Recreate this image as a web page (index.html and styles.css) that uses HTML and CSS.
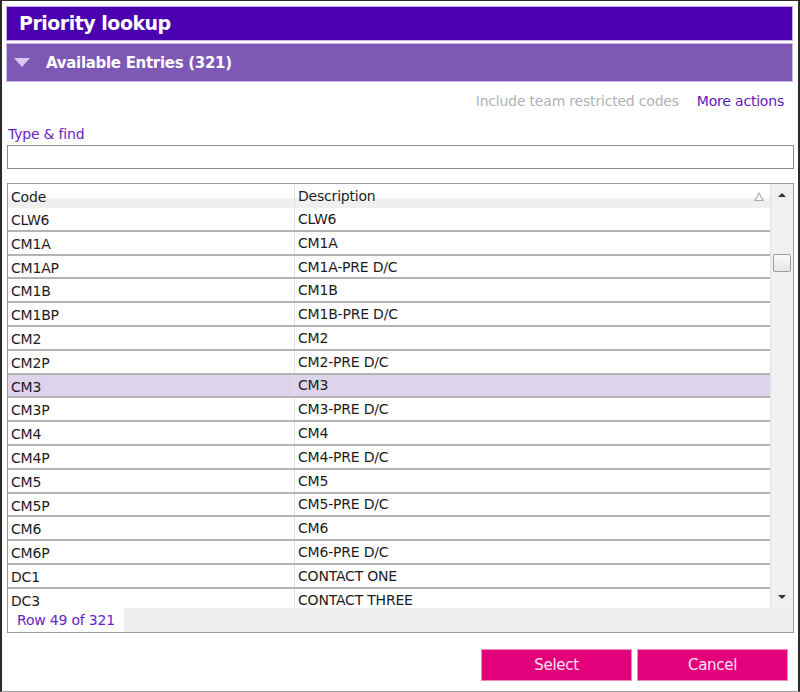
FILE: index.html
```html
<!DOCTYPE html>
<html lang="en">
<head>
  <meta charset="UTF-8" />
  <title>Priority lookup</title>
  <link rel="stylesheet" href="styles.css">
</head>
<body>
  <div class="window">
    <div class="title-bar">Priority lookup</div>
    <div class="section-bar">
      <span class="caret"></span>
      <span>Available Entries (321)</span>
    </div>

    <div class="actions">
      <span class="muted">Include team restricted codes</span>
      <a class="link">More actions</a>
    </div>

    <label class="find-label" for="find">Type &amp; find</label>
    <input id="find" class="find" type="text" />

    <div class="grid">
      <div class="grid-main">
        <div class="rows">
          <div class="row head">
            <div class="cell code">Code</div>
            <div class="cell desc">Description <span class="sort"></span></div>
          </div>
          <div class="row"><div class="cell code">CLW6</div><div class="cell desc">CLW6</div></div>
          <div class="row"><div class="cell code">CM1A</div><div class="cell desc">CM1A</div></div>
          <div class="row"><div class="cell code">CM1AP</div><div class="cell desc">CM1A-PRE D/C</div></div>
          <div class="row"><div class="cell code">CM1B</div><div class="cell desc">CM1B</div></div>
          <div class="row"><div class="cell code">CM1BP</div><div class="cell desc">CM1B-PRE D/C</div></div>
          <div class="row"><div class="cell code">CM2</div><div class="cell desc">CM2</div></div>
          <div class="row"><div class="cell code">CM2P</div><div class="cell desc">CM2-PRE D/C</div></div>
          <div class="row selected"><div class="cell code">CM3</div><div class="cell desc">CM3</div></div>
          <div class="row"><div class="cell code">CM3P</div><div class="cell desc">CM3-PRE D/C</div></div>
          <div class="row"><div class="cell code">CM4</div><div class="cell desc">CM4</div></div>
          <div class="row"><div class="cell code">CM4P</div><div class="cell desc">CM4-PRE D/C</div></div>
          <div class="row"><div class="cell code">CM5</div><div class="cell desc">CM5</div></div>
          <div class="row"><div class="cell code">CM5P</div><div class="cell desc">CM5-PRE D/C</div></div>
          <div class="row"><div class="cell code">CM6</div><div class="cell desc">CM6</div></div>
          <div class="row"><div class="cell code">CM6P</div><div class="cell desc">CM6-PRE D/C</div></div>
          <div class="row"><div class="cell code">DC1</div><div class="cell desc">CONTACT ONE</div></div>
          <div class="row"><div class="cell code">DC3</div><div class="cell desc">CONTACT THREE</div></div>
        </div>
        <div class="scrollbar">
          <span class="arrow up"></span>
          <span class="thumb"></span>
          <span class="arrow down"></span>
        </div>
      </div>
      <div class="grid-foot">
        <span class="count">Row 49 of 321</span>
      </div>
    </div>

    <div class="buttons">
      <button>Select</button>
      <button>Cancel</button>
    </div>
  </div>
</body>
</html>
```

FILE: styles.css
```css
html, body {
  margin: 0;
  padding: 0;
  background: #fff;
}
body {
  font-family: "DejaVu Sans", Verdana, sans-serif;
  font-size: 14px;
  letter-spacing: -0.2px;
  color: #1c1c1c;
}
.window {
  box-sizing: border-box;
  width: 800px;
  height: 692px;
  border: 1px solid #2a2a2a;
  border-left-width: 2px;
  border-right-width: 2px;
  border-bottom-color: #a0a0a0;
  padding: 5px 5px 0 4px;
}
.title-bar {
  box-sizing: border-box;
  height: 35px;
  background: #4a00ae;
  border: 1px solid #c4b0e6;
  color: #fff;
  font-size: 19px;
  font-weight: bold;
  letter-spacing: -0.5px;
  padding-left: 12px;
  line-height: 33px;
}
.section-bar {
  box-sizing: border-box;
  height: 39px;
  margin-top: 2px;
  background: #7e58b5;
  border: 1px solid #c9b8e6;
  color: #fff;
  font-weight: bold;
  font-size: 15px;
  letter-spacing: -0.3px;
  display: flex;
  align-items: center;
  gap: 16px;
  padding-left: 7px;
}
.caret {
  width: 0;
  height: 0;
  border-left: 8px solid transparent;
  border-right: 8px solid transparent;
  border-top: 9px solid #d6c9ec;
}
.actions {
  display: flex;
  justify-content: flex-end;
  gap: 18px;
  padding: 9px 9px 0 0;
  height: 20px;
  line-height: 20px;
}
.muted {
  color: #b2b2b2;
}
.link {
  color: #5d18bb;
}
.find-label {
  display: block;
  margin-top: 15px;
  margin-left: 2px;
  color: #6a22c4;
  height: 16px;
  line-height: 16px;
}
.find {
  display: block;
  box-sizing: border-box;
  width: 787px;
  height: 24px;
  margin: 3px 0 0 1px;
  border: 1px solid #8c8c8c;
  outline: none;
}
.grid {
  box-sizing: border-box;
  width: 787px;
  margin: 14px 0 0 1px;
  border: 1px solid #9a9a9a;
  background: #efefef;
}
.grid-main {
  display: flex;
  height: 424px;
  overflow: hidden;
}
.rows {
  flex: 1;
  background: #fff;
}
.row {
  box-sizing: border-box;
  display: flex;
  height: 23.8px;
  border-bottom: 2px solid #b4b4b4;
  line-height: 24px;
}
.row.head {
  height: 24px;
  border-bottom: none;
  background: linear-gradient(#fff 0%, #fff 55%, #efefef 65%, #efefef 100%);
  line-height: 27px;
}
.row.selected {
  background: #ddd4eb;
}
.cell {
  box-sizing: border-box;
  padding-left: 3px;
  white-space: nowrap;
  overflow: hidden;
}
.cell.code {
  width: 287px;
  border-right: 1px solid #e2e2e2;
}
.cell.desc {
  flex: 1;
  display: flex;
  justify-content: space-between;
  align-items: center;
}
.sort {
  width: 0;
  height: 0;
  margin-right: 6px;
  border-left: 5px solid transparent;
  border-right: 5px solid transparent;
  border-bottom: 9px solid #aaa;
  position: relative;
}
.sort::after {
  content: "";
  position: absolute;
  left: -3px;
  top: 2px;
  border-left: 3px solid transparent;
  border-right: 3px solid transparent;
  border-bottom: 6px solid #fff;
}
.scrollbar {
  width: 22px;
  background: #f0f0f0;
  border-left: 1px solid #e0e0e0;
  display: flex;
  flex-direction: column;
  align-items: center;
}
.arrow {
  width: 0;
  height: 0;
  border-left: 4px solid transparent;
  border-right: 4px solid transparent;
}
.arrow.up {
  margin-top: 9px;
  border-bottom: 4px solid #333;
}
.arrow.down {
  margin-top: auto;
  margin-bottom: 9px;
  border-top: 4px solid #333;
}
.thumb {
  box-sizing: border-box;
  width: 18px;
  height: 18px;
  margin-top: 57px;
  background: linear-gradient(#fafafa, #e6e6e6);
  border: 1px solid #9d9d9d;
  border-radius: 2px;
}
.grid-foot {
  height: 24px;
  display: flex;
}
.count {
  background: #fff;
  color: #6a22c4;
  padding: 0 9px 0 9px;
  line-height: 24px;
}
.buttons {
  display: flex;
  justify-content: flex-end;
  gap: 5px;
  margin-top: 16px;
  padding-right: 5px;
}
.buttons button {
  width: 151px;
  height: 32px;
  background: #e2007b;
  border: 1px solid #f28cc0;
  color: #fbe0ee;
  font-family: "DejaVu Sans", Verdana, sans-serif;
  font-size: 15px;
  letter-spacing: -0.3px;
  padding: 0;
}
```
